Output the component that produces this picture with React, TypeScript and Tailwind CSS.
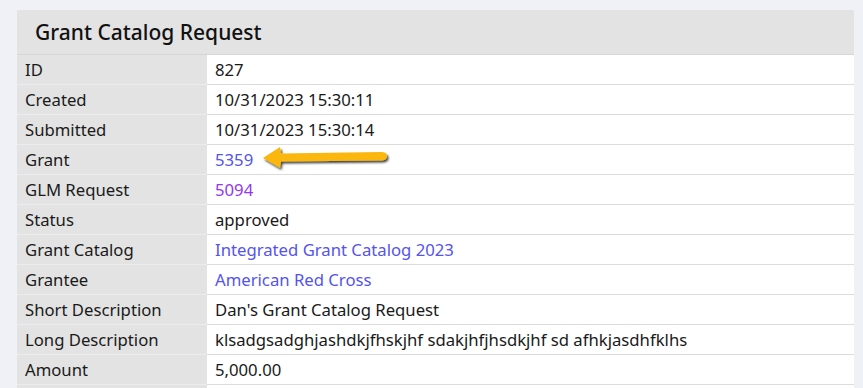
import React from "react";

const rows: { label: string; value: string; kind?: "link" | "visited" }[] = [
  { label: "ID", value: "827" },
  { label: "Created", value: "10/31/2023 15:30:11" },
  { label: "Submitted", value: "10/31/2023 15:30:14" },
  { label: "Grant", value: "5359", kind: "link" },
  { label: "GLM Request", value: "5094", kind: "visited" },
  { label: "Status", value: "approved" },
  { label: "Grant Catalog", value: "Integrated Grant Catalog 2023", kind: "link" },
  { label: "Grantee", value: "American Red Cross", kind: "link" },
  { label: "Short Description", value: "Dan's Grant Catalog Request" },
  { label: "Long Description", value: "klsadgsadghjashdkjfhskjhf sdakjhfjhsdkjhf sd afhkjasdhfklhs" },
  { label: "Amount", value: "5,000.00" },
  { label: "", value: "" },
];

function Arrow() {
  return (
    <svg width="140" height="30" viewBox="0 0 140 30" className="absolute left-[51px] top-[-3px]">
      <defs>
        <filter id="sh" x="-20%" y="-50%" width="140%" height="200%">
          <feDropShadow dx="1.5" dy="2" stdDeviation="1.2" floodColor="#000" floodOpacity="0.75" />
        </filter>
      </defs>
      <path
        d="M5 16 L22 5 L23 11.5 L124 10 Q129 10.5 129 14 Q129 18 124 18.5 L23 19.5 L22 26 Z"
        fill="#fbb710"
        filter="url(#sh)"
      />
    </svg>
  );
}

export default function App() {
  return (
    <div className="h-[388px] overflow-hidden w-full bg-[#f0f1f6] pt-[10px]" style={{ fontFamily: "'Noto Sans', sans-serif" }}>
      <div className="ml-[17px] w-[837px] bg-white">
        <div className="h-[45px] border-b border-[#d6d6d6] bg-[#e3e3e3] pl-[18px] flex items-center">
          <h1 className="text-[21px] font-medium text-[#111] leading-none">Grant Catalog Request</h1>
        </div>
        {rows.map((r, i) => (
          <div key={i} className="flex h-[30px]">
            <div className="w-[190px] shrink-0 bg-[#e3e3e3] border-b border-[#ececec] pl-[8px] flex items-center text-[16.7px] text-[#1a1a1a]">
              {r.label}
            </div>
            <div className="relative flex-1 border-b border-[#dcdcdc] pl-[8px] flex items-center text-[16.7px] text-[#1a1a1a]">
              {r.kind === "link" ? (
                <span className="text-[#5454ee]">{r.value}</span>
              ) : r.kind === "visited" ? (
                <span className="text-[#9436f2]">{r.value}</span>
              ) : (
                r.value
              )}
              {r.label === "Grant" && <Arrow />}
            </div>
          </div>
        ))}
      </div>
    </div>
  );
}
